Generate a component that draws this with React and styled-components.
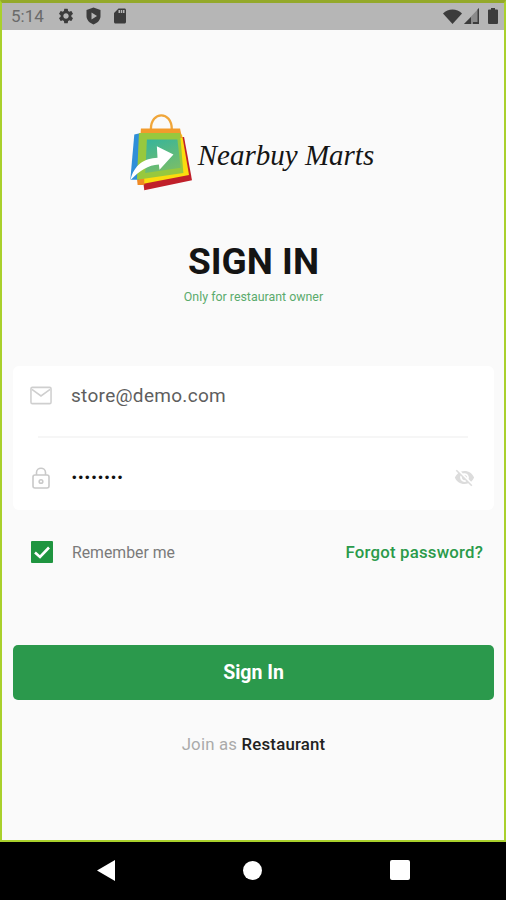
import React from "react";
import styled, { createGlobalStyle } from "styled-components";
import { MdSettings, MdSdCard, MdVisibilityOff } from "react-icons/md";

const GlobalStyle = createGlobalStyle`
  html, body {
    margin: 0;
    padding: 0;
    background: #000;
  }
  * {
    box-sizing: border-box;
  }
`;

const Screen = styled.div`
  width: 506px;
  height: 900px;
  display: flex;
  flex-direction: column;
  font-family: Roboto, "Liberation Sans", sans-serif;
  overflow: hidden;
`;

const Frame = styled.div`
  height: 842px;
  display: flex;
  flex-direction: column;
  background: #fafafa;
  border-style: solid;
  border-color: #a9d02c;
  border-width: 3px 2px 2px 2px;
  border-top-color: #94a92a;
`;

const StatusBar = styled.div`
  height: 27px;
  flex: none;
  display: flex;
  align-items: center;
  padding: 0 6px 1px 9px;
  background: #b6b6b6;
  color: #3c3c3c;
`;

const Time = styled.span`
  font-size: 17px;
  color: #6a6a6a;
  width: 46px;
`;

const StatusLeft = styled.div`
  display: flex;
  align-items: center;
  gap: 9.5px;
  margin-right: auto;
  font-size: 18px;
`;

const StatusRight = styled.div`
  display: flex;
  align-items: center;
  gap: 2px;
`;

const Content = styled.main`
  flex: 1;
  display: flex;
  flex-direction: column;
  padding: 0 10px 0 11px;
`;

const Logo = styled.div`
  display: flex;
  align-items: center;
  justify-content: center;
  gap: 3px;
  margin-top: 81px;
  height: 82px;
  padding-right: 6px;
`;

const LogoName = styled.span`
  font-family: "Liberation Serif", serif;
  font-style: italic;
  font-size: 29px;
  color: #151515;
  white-space: nowrap;
  margin-top: 6px;
`;

const Title = styled.h1`
  margin: 48px 0 0;
  font-size: 37px;
  line-height: 42px;
  font-weight: 700;
  text-align: center;
  color: #141414;
`;

const Subtitle = styled.p`
  margin: 7px 0 0;
  font-size: 12.4px;
  line-height: 14px;
  text-align: center;
  color: #5aab6c;
`;

const Card = styled.section`
  margin-top: 62px;
  height: 144px;
  background: #fff;
  border-radius: 6px;
  display: flex;
  flex-direction: column;
`;

const Field = styled.div`
  height: 70px;
  display: flex;
  align-items: center;
  padding: 0 17px 11px 17px;
  gap: 19px;
`;

const PasswordField = styled(Field)`
  flex: 1;
  padding: 7px 19px 0 17px;
  gap: 20px;
`;

const IconSlot = styled.span`
  width: 22px;
  flex: none;
  display: flex;
  justify-content: center;
`;

const FieldText = styled.span`
  flex: 1;
  font-size: 19px;
  color: #5e5e5e;
  letter-spacing: 0.3px;
`;

const Dots = styled(FieldText)`
  color: #111;
  font-size: 13px;
  letter-spacing: 2px;
  font-family: "Liberation Sans", sans-serif;
`;

const Divider = styled.hr`
  margin: 0 26px 0 25px;
  height: 2px;
  flex: none;
  border: 0;
  background: #f6f6f6;
`;

const Options = styled.div`
  margin-top: 31px;
  height: 22px;
  display: flex;
  align-items: center;
  padding: 0 11px 0 18px;
`;

const CheckBox = styled.span`
  width: 22px;
  height: 22px;
  flex: none;
  display: flex;
  align-items: center;
  justify-content: center;
  background: #1f9540;
  border-radius: 1px;
`;

const RememberLabel = styled.span`
  margin-left: 19px;
  font-size: 15.8px;
  color: #7a7a7a;
`;

const ForgotLink = styled.a`
  margin-left: auto;
  font-size: 16.8px;
  font-weight: 500;
  color: #2a9a4a;
  letter-spacing: 0.2px;
`;

const SubmitButton = styled.button`
  margin-top: 82px;
  height: 55px;
  border: 0;
  border-radius: 5px;
  background: #2b994c;
  color: #fff;
  font-family: inherit;
  font-size: 19.5px;
  font-weight: 700;
`;

const JoinLine = styled.p`
  margin: 35px 0 0;
  font-size: 16.8px;
  line-height: 19px;
  text-align: center;
  color: #aaa;
  letter-spacing: 0.2px;
`;

const JoinLink = styled.span`
  color: #222;
  font-weight: 500;
`;

const NavBar = styled.nav`
  height: 58px;
  flex: none;
  background: #000;
  display: flex;
  align-items: center;
  justify-content: center;
  gap: 128px;
  padding: 0 0 2px 1px;
`;

const NavCircle = styled.span`
  width: 19px;
  height: 19px;
  border-radius: 50%;
  background: #fff;
`;

const NavSquare = styled.span`
  width: 20px;
  height: 20px;
  border-radius: 2px;
  background: #fff;
`;

const ShieldIcon = () => (
  <svg width="17" height="18" viewBox="0 0 17 18">
    <path d="M8.5 0.5 L15.5 3 V9 C15.5 13 12.5 16 8.5 17.5 C4.5 16 1.5 13 1.5 9 V3 Z" fill="#3c3c3c" />
    <path d="M6.5 5.5 L12 9 L6.5 12.5 Z" fill="#b6b6b6" />
  </svg>
);

const WifiIcon = () => (
  <svg width="19" height="15" viewBox="0 0 19 15">
    <path d="M0 4.5 C5 -0.8 14 -0.8 19 4.5 L9.5 15 Z" fill="#3c3c3c" />
  </svg>
);

const SignalIcon = () => (
  <svg width="15" height="16" viewBox="0 0 15 16">
    <path d="M15 0 V16 H0 Z" fill="#8a8a8a" />
    <path d="M9 6.5 V16 H15 V0 L13.5 1.5 V14 H9 Z" fill="#3c3c3c" />
    <path d="M0 16 L7 9 V16 Z" fill="#3c3c3c" />
  </svg>
);

const BatteryIcon = () => (
  <svg width="10" height="16" viewBox="0 0 10 16" style={{ marginLeft: 7 }}>
    <path d="M3 0 H7 V1.5 H9 A1 1 0 0 1 10 2.5 V15 A1 1 0 0 1 9 16 H1 A1 1 0 0 1 0 15 V2.5 A1 1 0 0 1 1 1.5 H3 Z" fill="#3c3c3c" />
  </svg>
);

const BagLogo = () => (
  <svg width="68" height="82" viewBox="20 20 205 245">
    <defs>
      <linearGradient id="bagInner" x1="0" y1="0" x2="0.4" y2="1">
        <stop offset="0" stopColor="#35b49c" />
        <stop offset="1" stopColor="#74bd6c" />
      </linearGradient>
    </defs>
    <path d="M92 74 C92 18 155 18 155 74" fill="none" stroke="#f0a63a" strokeWidth="7" />
    <path d="M100 100 L192 97 L216 228 L72 258 L60 150 Z" fill="#c0202a" />
    <path d="M75 90 L186 90 L207 212 L62 240 Z" fill="#fbdc0e" />
    <path d="M50 222 H72 V242 H52 Z" fill="#f08a24" />
    <path d="M62 72 H180 L186 100 H60 Z" fill="#f29b2c" />
    <path d="M42 90 L62 85 L56 226 L30 226 Z" fill="#2f8fd8" />
    <path d="M56 85 H180 L190 206 L50 226 Z" fill="#97c83e" />
    <path d="M80 105 H172 L182 190 L75 206 Z" fill="url(#bagInner)" />
    <path d="M30 228 C42 180 72 162 112 160 L110 125 L160 150 L118 196 L116 180 C84 182 58 198 30 228 Z" fill="#fff" />
  </svg>
);

const MailIcon = () => (
  <svg width="23" height="19" viewBox="0 0 23 19" fill="none" stroke="#cfcfcf" strokeWidth="1.6">
    <rect x="1" y="1" width="21" height="17" rx="1.5" />
    <path d="M2 3 L11.5 10 L21 3" />
  </svg>
);

const LockIcon = () => (
  <svg width="18" height="22" viewBox="0 0 18 22" fill="none" stroke="#c9c9c9" strokeWidth="1.6">
    <rect x="1" y="8" width="16" height="13" rx="2" />
    <path d="M4.5 8 V5.5 C4.5 -0.2 13.5 -0.2 13.5 5.5 V8" />
    <circle cx="9" cy="14.5" r="1.8" />
  </svg>
);

const CheckMark = () => (
  <svg width="16" height="13" viewBox="0 0 16 13" fill="none" stroke="#fff" strokeWidth="2.6">
    <path d="M1 6.5 L6 11 L15 1.5" />
  </svg>
);

const BackTriangle = () => (
  <svg width="18" height="21" viewBox="0 0 18 21">
    <path d="M18 0 V21 L0 10.5 Z" fill="#fff" />
  </svg>
);

const App = () => (
  <Screen>
    <GlobalStyle />
    <Frame>
      <StatusBar>
        <Time>5:14</Time>
        <StatusLeft>
          <MdSettings />
          <ShieldIcon />
          <MdSdCard />
        </StatusLeft>
        <StatusRight>
          <WifiIcon />
          <SignalIcon />
          <BatteryIcon />
        </StatusRight>
      </StatusBar>
      <Content>
        <Logo>
          <BagLogo />
          <LogoName>Nearbuy Marts</LogoName>
        </Logo>
        <Title>SIGN IN</Title>
        <Subtitle>Only for restaurant owner</Subtitle>
        <Card>
          <Field>
            <IconSlot>
              <MailIcon />
            </IconSlot>
            <FieldText>store@demo.com</FieldText>
          </Field>
          <Divider />
          <PasswordField>
            <IconSlot>
              <LockIcon />
            </IconSlot>
            <Dots>••••••••</Dots>
            <MdVisibilityOff size={21} color="#dcdcdc" />
          </PasswordField>
        </Card>
        <Options>
          <CheckBox>
            <CheckMark />
          </CheckBox>
          <RememberLabel>Remember me</RememberLabel>
          <ForgotLink>Forgot password?</ForgotLink>
        </Options>
        <SubmitButton>Sign In</SubmitButton>
        <JoinLine>
          Join as <JoinLink>Restaurant</JoinLink>
        </JoinLine>
      </Content>
    </Frame>
    <NavBar>
      <BackTriangle />
      <NavCircle />
      <NavSquare />
    </NavBar>
  </Screen>
);

export default App;
